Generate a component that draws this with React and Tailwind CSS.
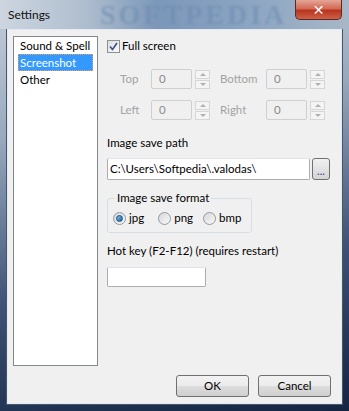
// App.jsx
// Settings dialog, Windows 7 style

import React from 'react';

const font = { fontFamily: 'Lato, "Noto Sans", sans-serif' };

const Spin = () => (
    <div className="flex flex-col gap-[1px] w-[15px] ml-[3px]">
        <div className="h-[9px] border border-[#d6d6d6] bg-[#f4f4f4] flex items-center justify-center">
            <div className="w-0 h-0 border-l-[3px] border-r-[3px] border-b-[3px] border-l-transparent border-r-transparent border-b-[#b0b0b0]"></div>
        </div>
        <div className="h-[9px] border border-[#d6d6d6] bg-[#f4f4f4] flex items-center justify-center">
            <div className="w-0 h-0 border-l-[3px] border-r-[3px] border-t-[3px] border-l-transparent border-r-transparent border-t-[#b0b0b0]"></div>
        </div>
    </div>
);

const SpinField = ({ label, labelW }) => (
    <div className="flex items-center">
        <span className={`${labelW} text-[#a3a3a3]`}>{label}</span>
        <div className="w-[41px] h-[20px] border border-[#cfcfcf] rounded-[2px] bg-[#f0f0f0] flex items-center pl-[7px] text-[#8a8a8a]">0</div>
        <Spin />
    </div>
);

const Radio = ({ checked, label }) => (
    <div className="flex items-center">
        <div className="w-[13px] h-[13px] rounded-full border border-[#8f9aa6] bg-gradient-to-br from-[#d6d6d6] to-[#fafafa] flex items-center justify-center">
            {checked && (
                <div className="w-[7px] h-[7px] rounded-full bg-gradient-to-br from-[#7fc3f0] to-[#1b5f9e] border border-[#1d4f7c]"></div>
            )}
        </div>
        <span className="ml-[3px]">{label}</span>
    </div>
);

const App = () => {
    return (
        <div
            className="w-[349px] h-[411px] relative overflow-hidden text-[11.5px] text-black leading-[16px] bg-[linear-gradient(170deg,#c4ced9_0%,#97a8bd_30%,#3c5174_65%,#142441_100%)]"
            style={font}
        >
            {/* Barra de título */}
            <div className="h-[29px] flex items-center pl-[8px] relative overflow-hidden bg-[linear-gradient(90deg,#cdd6e0_0%,#aebdce_25%,#7b97b9_45%,#8aa4c2_70%,#a8b7c7_100%)]">
                <span className="text-[12px] text-[#111] relative z-10">Settings</span>
                <span className="absolute left-[100px] top-0 text-[28px] leading-[29px] font-bold tracking-[3px] text-[#6a88ad]/50 blur-[1px]" style={{ fontFamily: '"Liberation Serif", serif' }}>
                    SOFTPEDIA
                </span>
                <div className="absolute left-[295px] top-0 w-[47px] h-[20px] rounded-b-[5px] border border-t-0 border-[#5b2a22] bg-[linear-gradient(180deg,#e5a597_0%,#d36a55_45%,#b8351e_55%,#cf6048_100%)] flex items-center justify-center">
                    <span className="text-white font-bold text-[14px] leading-none" style={{ fontFamily: '"DejaVu Sans", sans-serif' }}>✕</span>
                </div>
            </div>

            {/* Área do cliente */}
            <div className="mx-[7px] h-[375px] border border-[#e4eaf0] outline outline-1 outline-[#48566a] bg-[#f0f0f0] flex flex-col">
                <div className="flex pt-[6px] pl-[5px]">
                    {/* Lista de categorias */}
                    <div className="w-[85px] h-[330px] border border-[#828790] bg-white px-[4px] whitespace-nowrap">
                        <div className="h-[17px] flex items-center pl-[2px]">Sound &amp; Spell</div>
                        <div className="h-[17px] flex items-center pl-[2px] bg-[#3399ff] text-white outline outline-1 outline-dotted outline-[#e8a060] -outline-offset-1">Screenshot</div>
                        <div className="h-[17px] flex items-center pl-[2px]">Other</div>
                    </div>

                    {/* Painel de opções */}
                    <div className="ml-[9px] flex flex-col whitespace-nowrap">
                        <div className="flex items-center mt-[3px] h-[14px]">
                            <div className="w-[13px] h-[13px] border border-[#8e8f8f] bg-gradient-to-br from-[#dcdcdc] to-[#fbfbfb] flex items-center justify-center">
                                <svg width="9" height="9" viewBox="0 0 9 9">
                                    <path d="M1 4.5 L3.5 7.5 L8 1" fill="none" stroke="#3a4f8a" strokeWidth="1.6" />
                                </svg>
                            </div>
                            <span className="ml-[2px]">Full screen</span>
                        </div>

                        <div className="flex mt-[16px] pl-[13px]">
                            <SpinField label="Top" labelW="w-[31px]" />
                            <div className="ml-[10px]"><SpinField label="Bottom" labelW="w-[46px]" /></div>
                        </div>
                        <div className="flex mt-[11px] pl-[13px]">
                            <SpinField label="Left" labelW="w-[31px]" />
                            <div className="ml-[10px]"><SpinField label="Right" labelW="w-[46px]" /></div>
                        </div>

                        <div className="mt-[15px]">Image save path</div>
                        <div className="flex mt-[7px]">
                            <div className="w-[203px] h-[22px] border border-[#abadb3] border-t-[#e2e3ea] rounded-[2px] bg-white flex items-center pl-[2px]">C:\Users\Softpedia\.valodas\</div>
                            <div className="ml-[2px] w-[18px] h-[22px] border border-[#707070] rounded-[3px] bg-gradient-to-b from-[#f2f2f2] to-[#d4d4d4] flex items-end justify-center pb-[3px] text-[11px] leading-none text-[#5030a0]">...</div>
                        </div>

                        <fieldset className="mt-[10px] w-[145px] border border-[#d5dfe5] rounded-[3px] pl-[5px] pb-[6px]">
                            <legend className="ml-[2px] px-[2px]">Image save format</legend>
                            <div className="flex items-center h-[16px] mt-[4px]">
                                <Radio checked label="jpg" />
                                <div className="ml-[14px]"><Radio label="png" /></div>
                                <div className="ml-[10px]"><Radio label="bmp" /></div>
                            </div>
                        </fieldset>

                        <div className="mt-[10px]">Hot key (F2-F12) (requires restart)</div>
                        <div className="mt-[8px] w-[99px] h-[20px] border border-[#abadb3] border-t-[#e2e3ea] rounded-[2px] bg-white"></div>
                    </div>
                </div>

                {/* Botões */}
                <div className="flex justify-end gap-[9px] pr-[10px] mt-[9px]">
                    <button className="w-[73px] h-[22px] border border-[#707070] rounded-[3px] bg-[linear-gradient(180deg,#f2f2f2_0%,#ebebeb_50%,#dddddd_51%,#cfcfcf_100%)]">OK</button>
                    <button className="w-[73px] h-[22px] border border-[#707070] rounded-[3px] bg-[linear-gradient(180deg,#f2f2f2_0%,#ebebeb_50%,#dddddd_51%,#cfcfcf_100%)]">Cancel</button>
                </div>
            </div>
        </div>
    );
};

export default App;
